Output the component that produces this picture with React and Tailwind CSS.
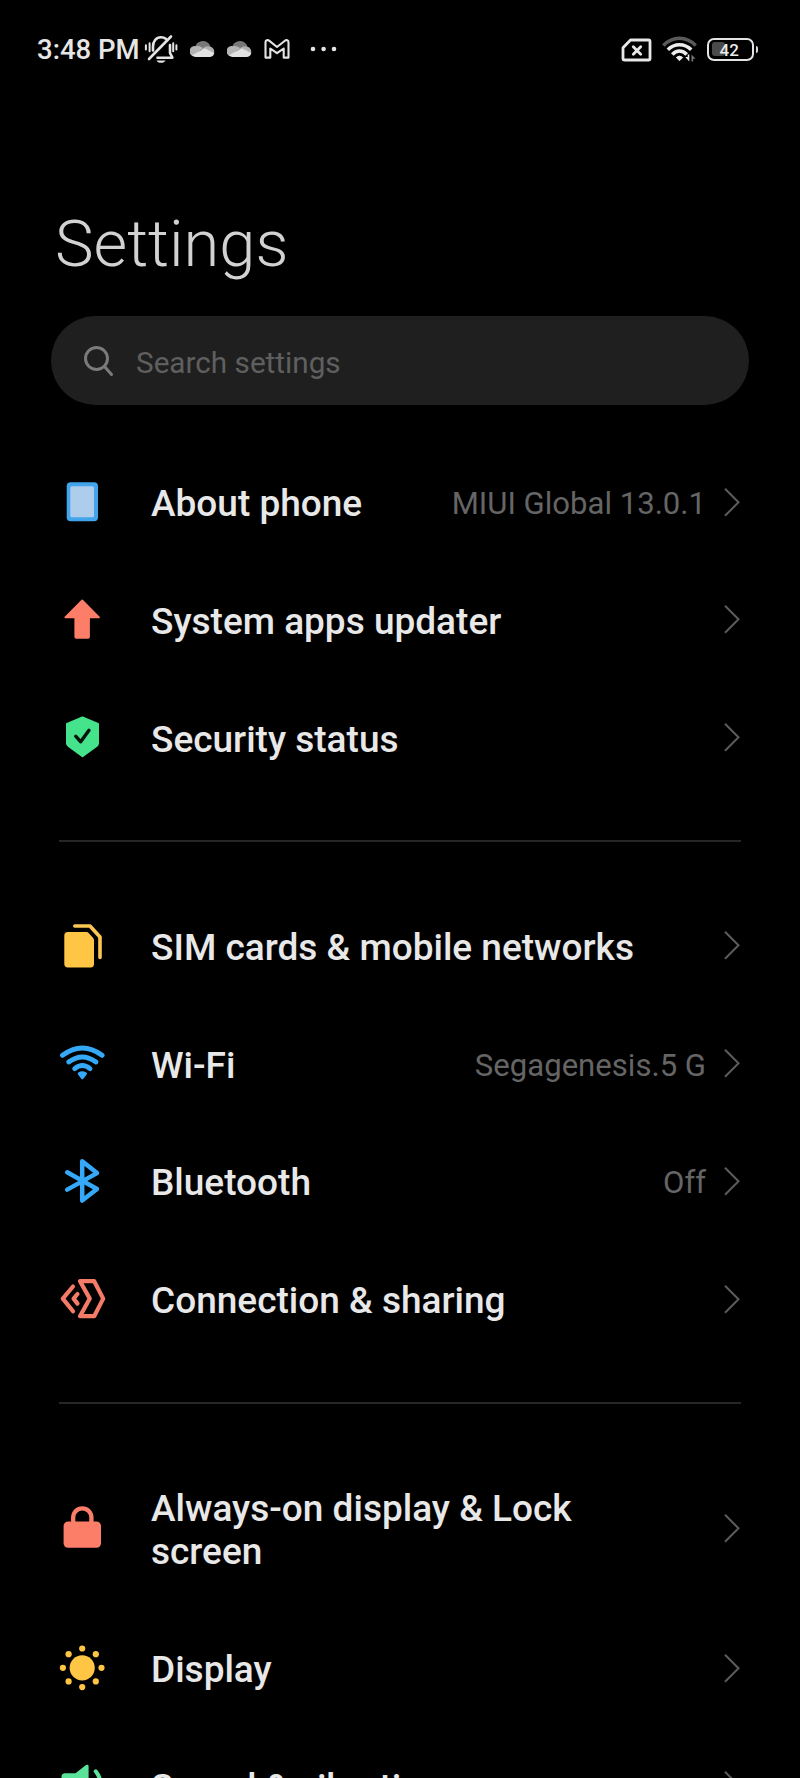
function BellOff() {
  return (
    <svg className="h-[30px] w-[34px] shrink-0" viewBox="0 0 34 30" fill="none" stroke="#e4e4e4" strokeWidth="2.6" strokeLinecap="round">
      <path d="M9 16.500V12.500C9 7.500 12 3.200 17 3.200c2 0 3.600.6 4.800 1.600M26 11v8l2.400 4.700H13.500" strokeLinejoin="round" />
      <path d="M5 25 27 2.500" />
      <path d="M1.900 11.200v4.200M5.600 9.200v8M29.200 9.200v8M32.400 11.200v4.200" strokeWidth="2" />
      <path d="M12.500 26.400h9c-.8 1.600-2.400 2.300-4.500 2.300s-3.700-.7-4.500-2.300z" fill="#e4e4e4" stroke="none" />
    </svg>
  );
}

function Cloud() {
  return (
    <svg className="h-4 w-[25px] shrink-0" viewBox="0 0 25 16">
      <path d="M5 7a8 8 0 0 1 14.500-3.500L21 7l-8 3z" fill="#777" />
      <path d="M5.800 5.200c3-1 5.700.6 7.500 2L3 15.200A5.200 5.200 0 0 1 5.800 5.200z" fill="#b4b4b4" />
      <path d="M13 7.400c2.200-2.200 5-2.800 7.500-1.600a5 5 0 0 1 3.600 6z" fill="#b0b0b0" />
      <path d="M2 14.200 14.500 7.300l9.800 4.500A5 5 0 0 1 20 16H5.500A5.500 5.500 0 0 1 2 14.200z" fill="#e2e2e2" />
    </svg>
  );
}

function Mail() {
  return (
    <svg className="h-5 w-[26px] shrink-0" viewBox="0 0 26 20" fill="none" stroke="#e4e4e4" strokeWidth="2.100" strokeLinejoin="round">
      <path d="M1.500 3.200c0-2 2.200-2.600 3.600-1.500L13 8l7.900-6.300c1.400-1.100 3.600-.5 3.600 1.500V18.600h-4.800V9.500L13 14.200 6.300 9.500v9.100H1.500z" />
    </svg>
  );
}

function StatusBar() {
  return (
    <header className="flex h-[98px] shrink-0 items-center pl-[37px] pr-[42px]">
      <span className="relative top-px w-[107px] whitespace-nowrap text-[27.500px] font-medium leading-none text-[#e6e6e6]">3:48 PM</span>
      <BellOff />
      <div className="ml-[12px] flex items-center gap-3">
        <Cloud />
        <Cloud />
        <Mail />
      </div>
      <svg className="ml-[20px] h-[6px] w-[28px]" viewBox="0 0 28 6" fill="#e4e4e4">
        <circle cx="3" cy="3" r="2.300" />
        <circle cx="13.600" cy="3" r="2.300" />
        <circle cx="24" cy="3" r="2.300" />
      </svg>
      <div className="ml-auto flex items-center">
        <svg className="relative top-px h-6 w-[31px]" viewBox="0 0 31 24" fill="none" stroke="#e8e8e8" strokeWidth="2.800" strokeLinejoin="round" strokeLinecap="round">
          <path d="M9.500 2H27.500a1.500 1.500 0 0 1 1.500 1.500V20.500a1.500 1.500 0 0 1-1.500 1.500H3.500A1.500 1.500 0 0 1 2 20.500V9.800z" />
          <path d="M12.300 8.800l7.400 7.400M19.700 8.800l-7.400 7.400" />
        </svg>
        <svg className="ml-[10px] h-[26px] w-9" viewBox="0 0 36 26" fill="none">
          <path d="M1.300 9.500Q8.500 2.300 17.500 2.300T33.700 9.500" stroke="#5a5a5a" strokeWidth="3.400" />
          <path d="M5.800 13.800Q11 8.800 17.500 8.800T29.200 13.800" stroke="#ededed" strokeWidth="3.600" />
          <path d="M10.300 18.400Q13.500 15 17.500 15T24.700 18.400" stroke="#ededed" strokeWidth="3.600" />
          <path d="M14.300 21.500q3.200-2.800 6.400 0l-3.200 3.200z" fill="#ededed" stroke="#ededed" strokeLinejoin="round" />
          <path d="M27.300 18.500v7l-4-4.500h2.400v-2.500z" fill="#ededed" />
          <path d="M29.500 25.500v-7l4 4.300h-2.400v2.700z" fill="#777" />
        </svg>
        <div className="ml-[9px] flex h-[23px] w-[47px] items-center rounded-[7px] border-2 border-[#e4e4e4] pl-[3px]">
          <div className="h-[14px] w-[13px] shrink-0 rounded-[3px] bg-[#4a4a4a]" />
          <span className="relative top-px -ml-[5px] text-[17px] font-medium leading-none text-[#ececec]">42</span>
        </div>
        <div className="ml-[2px] h-[7px] w-[2.500px] rounded-r bg-[#d8d8d8]" />
      </div>
    </header>
  );
}

const ICONS = {
  phone: (
    <>
      <rect x="8.700" y="4.300" width="31.300" height="39" rx="4" fill="#42a5ec" />
      <rect x="12.300" y="8.300" width="23.700" height="31" rx="1.500" fill="#aecdec" />
    </>
  ),
  update: (
    <path
      d="M24.200 5.500 41 22.300H31V41.800a1 1 0 0 1-1 1H18.300a1 1 0 0 1-1-1V22.300H7.300z"
      fill="#fd7e68" stroke="#fd7e68" strokeWidth="1.800" strokeLinejoin="round"
    />
  ),
  shield: (
    <>
      <path d="M24.500 4.500 40 11v19.300Q39.800 32 38.500 33L24.500 43.300 10.500 33Q9 32 9 30.300V11z" fill="#45e38b" stroke="#45e38b" strokeWidth="2" strokeLinejoin="round" />
      <path d="m17.700 23.200 5 5.600L31 17.300" fill="none" stroke="#06140c" strokeWidth="3.400" strokeLinecap="round" strokeLinejoin="round" />
    </>
  ),
  sim: (
    <>
      <path d="M9.800 11H28.500Q29.800 11 30.600 12L35 16.800Q36 18 36 19.300V43a3.400 3.400 0 0 1-3.400 3.400H9.800A3.500 3.500 0 0 1 6.300 43V14.500A3.500 3.500 0 0 1 9.800 11z" fill="#ffc645" />
      <path d="M16.800 5H32L42 16V36.500" fill="none" stroke="#fcc652" strokeWidth="3.600" strokeLinecap="round" strokeLinejoin="round" />
    </>
  ),
  wifi: (
    <g fill="none" stroke="#35a8f7" strokeWidth="4.900" strokeLinecap="round">
      <path d="M4.500 16.300Q24.300 1.700 44.100 16.300" />
      <path d="M10.700 23Q24.300 12.800 38 23" />
      <path d="M16.700 29.600Q24.300 23.400 32 29.600" />
      <path d="M21 34.700q3.300-2.200 6.600 0l-3.300 4.300z" fill="#35a8f7" strokeWidth="2.600" strokeLinejoin="round" />
    </g>
  ),
  bluetooth: (
    <path d="M9.200 15.300 39 32 24.200 43.500V4.200L39 16.100 9.200 32.600" fill="none" stroke="#35a8f7" strokeWidth="4.500" strokeLinecap="round" strokeLinejoin="round" />
  ),
  sharing: (
    <g fill="none" stroke="#f47b68" strokeWidth="4.200" strokeLinecap="round" strokeLinejoin="round">
      <path d="M22 6.200H36.200L45.200 23.600 36.200 41.200H22L31.800 23.600z" />
      <path d="M15 11.500 4.800 23.600 15 36.300" />
      <path d="M19.500 19 15.600 23.600l3.900 5" />
    </g>
  ),
  lock: (
    <>
      <rect x="5.600" y="17.400" width="37.400" height="26.300" rx="4.500" fill="#fd7e68" />
      <path d="M15.200 19v-5.500a9.100 9.100 0 0 1 18.200 0V19" fill="none" stroke="#fd7e68" strokeWidth="4.300" />
    </>
  ),
  sun: (
    <g fill="#ffc645">
      <circle cx="24.200" cy="23.800" r="12.600" />
      <circle cx="24.200" cy="4.500" r="3.100" />
      <circle cx="24.200" cy="43.100" r="3.100" />
      <circle cx="4.900" cy="23.800" r="3.100" />
      <circle cx="43.500" cy="23.800" r="3.100" />
      <circle cx="10.600" cy="10.200" r="3.100" />
      <circle cx="37.800" cy="10.200" r="3.100" />
      <circle cx="10.600" cy="37.400" r="3.100" />
      <circle cx="37.800" cy="37.400" r="3.100" />
    </g>
  ),
  sound: (
    <>
      <path d="M7 12.200h10.500L28 4a1.600 1.600 0 0 1 2.600 1.300v37.500a1.600 1.600 0 0 1-2.600 1.300L17.500 36H7a3.500 3.500 0 0 1-3.500-3.500V15.700A3.500 3.500 0 0 1 7 12.200z" fill="#5be39a" />
      <path d="M37.700 10.300q10 12.700 0 27.400" fill="none" stroke="#5be39a" strokeWidth="4" strokeLinecap="round" />
    </>
  ),
};

const GROUPS = [
  [
    { icon: "phone", label: "About phone", value: "MIUI Global 13.0.1" },
    { icon: "update", label: "System apps updater" },
    { icon: "shield", label: "Security status" },
  ],
  [
    { icon: "sim", label: "SIM cards & mobile networks" },
    { icon: "wifi", label: "Wi-Fi", value: "Segagenesis.5 G" },
    { icon: "bluetooth", label: "Bluetooth", value: "Off" },
    { icon: "sharing", label: "Connection & sharing" },
  ],
  [
    { icon: "lock", label: "Always-on display & Lock screen" },
    { icon: "sun", label: "Display" },
    { icon: "sound", label: "Sound & vibration" },
  ],
];

function Row({ icon, label, value }) {
  return (
    <li className="flex items-center py-[37.400px]">
      <svg className="-my-1 size-12 shrink-0" viewBox="0 0 48 48">{ICONS[icon]}</svg>
      <span className="relative top-[2px] ml-[45px] max-w-[500px] text-[37px] font-medium leading-[43px] text-[#e8e8e8]">{label}</span>
      {value && <span className="relative top-[2px] ml-auto whitespace-nowrap text-[31.100px] leading-[43px] text-[#656565]">{value}</span>}
      <svg className={value ? "ml-[18px] h-[30px] w-4 shrink-0" : "ml-auto h-[30px] w-4 shrink-0"} viewBox="0 0 16 30" fill="none" stroke="#5c5c5c" strokeWidth="2">
        <path d="M1 1.800 14.500 15.300 1 28.800" />
      </svg>
    </li>
  );
}

export default function App() {
  return (
    <main className="flex h-[1778px] w-[800px] flex-col overflow-hidden bg-black font-['Roboto',sans-serif]">
      <StatusBar />
      <h1 className="mt-[108px] pl-[55px] text-[65px] font-light leading-[76px] text-[#d2d2d2]">Settings</h1>
      <div className="mx-[51px] mt-[34px] flex h-[89px] shrink-0 items-center rounded-full bg-[#1f1f1f] pl-[32px]">
        <svg className="h-[32px] w-[32px]" viewBox="0 0 32 32" fill="none" stroke="#7b7b7b" strokeWidth="3" strokeLinecap="round">
          <circle cx="13.500" cy="13.500" r="11" />
          <path d="m21.500 21.500 7 8" />
        </svg>
        <span className="relative top-[2px] ml-[21px] text-[29.700px] leading-none text-[#5f5f5f]">Search settings</span>
      </div>
      <div className="mt-[37.800px] pl-[58px] pr-[60px]">
        {GROUPS.map((rows, i) => (
          <section key={i}>
            {i > 0 && <div className="my-[44.200px] -mr-px ml-px h-[2px] bg-[#262626]" />}
            <ul>
              {rows.map((row) => (
                <Row key={row.label} {...row} />
              ))}
            </ul>
          </section>
        ))}
      </div>
    </main>
  );
}
